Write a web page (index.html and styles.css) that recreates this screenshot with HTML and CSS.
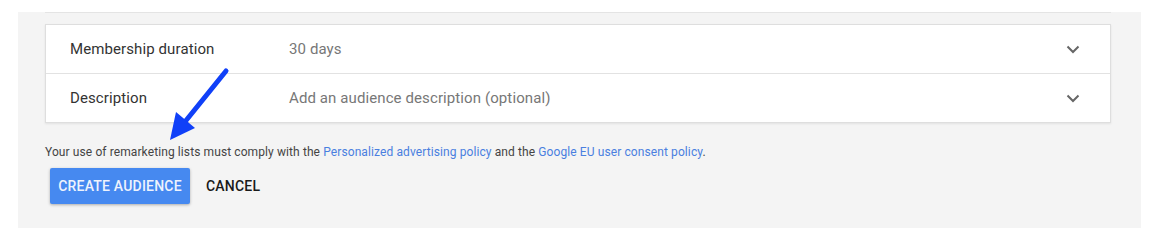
FILE: index.html
```html
<!DOCTYPE html>
<html lang="en">
<head>
  <meta charset="UTF-8">
  <title>Create Audience</title>
  <link rel="stylesheet" href="styles.css">
</head>
<body>
  <div class="panel">
    <div class="card-edge"></div>

    <!-- Settings card -->
    <div class="settings-card">
      <div class="setting-row">
        <span class="setting-label">Membership duration</span>
        <span class="setting-value">30 days</span>
        <svg class="chevron" width="14" height="9" viewBox="0 0 14 9"><path d="M1.5 1.5 L7 7 L12.5 1.5" fill="none" stroke="#666" stroke-width="2"/></svg>
      </div>
      <div class="setting-row">
        <span class="setting-label">Description</span>
        <span class="setting-value">Add an audience description (optional)</span>
        <svg class="chevron" width="14" height="9" viewBox="0 0 14 9"><path d="M1.5 1.5 L7 7 L12.5 1.5" fill="none" stroke="#666" stroke-width="2"/></svg>
      </div>
    </div>

    <p class="policy">Your use of remarketing lists must comply with the <a href="#">Personalized advertising policy</a> and the <a href="#">Google EU user consent policy</a>.</p>

    <div class="actions">
      <button class="btn-primary">Create audience</button>
      <button class="btn-flat">Cancel</button>
    </div>
  </div>

  <!-- Annotation arrow -->
  <svg class="annotation" width="1164" height="244" viewBox="0 0 1164 244">
    <line x1="226" y1="71" x2="184" y2="123" stroke="#1040f8" stroke-width="5" stroke-linecap="round"/>
    <polygon points="170,140 176,112 195,128" fill="#1040f8"/>
  </svg>
</body>
</html>
```

FILE: styles.css
```css
body {
  margin: 0;
  background: #fff;
  font-family: Roboto, "Liberation Sans", sans-serif;
}

.panel {
  margin: 12px 0 0 18px;
  width: 1123px;
  height: 216px;
  box-sizing: border-box;
  padding: 0 30px 0 27px;
  background: #f4f4f4;
}

.card-edge {
  height: 1px;
  background: #e4e4e4;
  margin-bottom: 11px;
}

/* Settings card */
.settings-card {
  background: #fff;
  border: 1px solid #dedede;
  box-shadow: 0 1px 2px rgba(0, 0, 0, 0.08);
}

.setting-row {
  display: flex;
  align-items: center;
  height: 48px;
  padding: 0 30px 0 24px;
}

.setting-row + .setting-row {
  border-top: 1px solid #e2e2e2;
}

.setting-label {
  width: 219px;
  font-size: 15px;
  letter-spacing: 0.1px;
  color: #333;
}

.setting-value {
  flex: 1;
  font-size: 15px;
  letter-spacing: 0.1px;
  color: #777;
}

.chevron {
  display: block;
}

/* Policy note */
.policy {
  margin: 21px 0 0;
  font-size: 12px;
  line-height: 16px;
  letter-spacing: 0.1px;
  color: #444;
}

.policy a {
  color: #4a7fe0;
  text-decoration: none;
}

/* Buttons */
.actions {
  display: flex;
  align-items: center;
  margin-top: 8px;
  padding-left: 5px;
}

.btn-primary,
.btn-flat {
  font-family: Roboto, "Liberation Sans", sans-serif;
  font-size: 14px;
  font-weight: 500;
  letter-spacing: 0.2px;
  text-transform: uppercase;
  height: 36px;
  border: none;
  border-radius: 2px;
  cursor: pointer;
}

.btn-primary {
  width: 140px;
  padding: 0;
  background: #4689f0;
  color: #eef3fd;
  box-shadow: 0 1px 3px rgba(0, 0, 0, 0.3);
}

.btn-flat {
  background: transparent;
  color: #1a1a1a;
  padding: 0 16px;
}

.annotation {
  position: absolute;
  top: 0;
  left: 0;
  pointer-events: none;
}
```
